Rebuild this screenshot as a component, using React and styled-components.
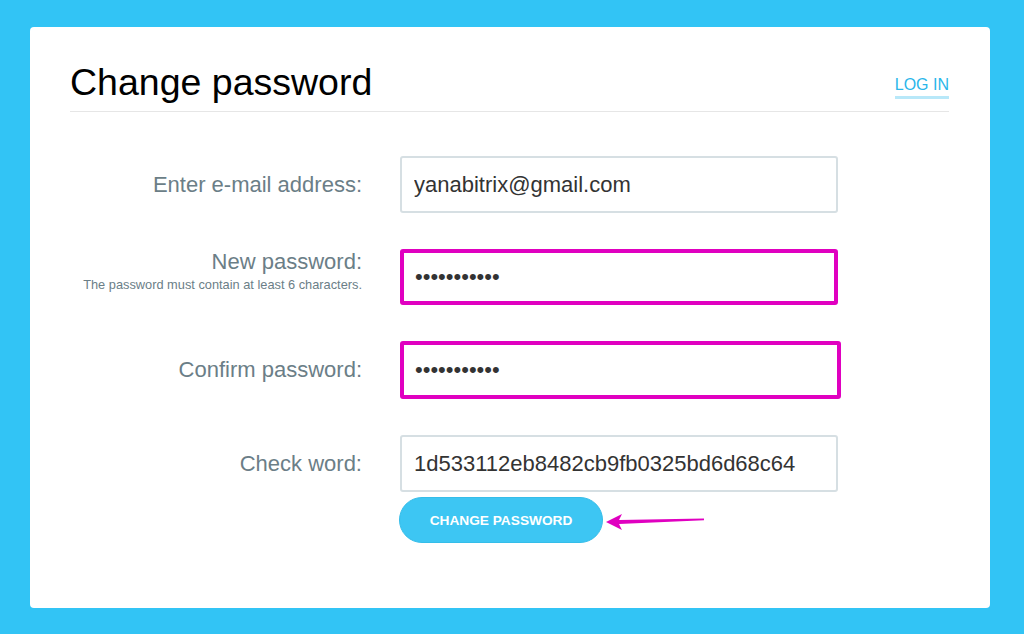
import styled, { createGlobalStyle } from "styled-components";

const GlobalStyle = createGlobalStyle`
    html, body {
        margin: 0;
        padding: 0;
        background: #32c4f5;
        font-family: "Liberation Sans", Arial, sans-serif;
    }
    * { box-sizing: border-box; }
`

const fields = [
    { label: "Enter e-mail address:", type: "text", value: "yanabitrix@gmail.com", height: 57 },
    { label: "New password:", hint: "The password must contain at least 6 characters.", type: "password", value: "12345678901", highlight: true },
    { label: "Confirm password:", type: "password", value: "12345678901", highlight: true, width: 441, height: 58 },
    { label: "Check word:", type: "text", value: "1d533112eb8482cb9fb0325bd6d68c64", height: 57 },
]

const App = () => {
    return <Page>
        <GlobalStyle />
        <Card>
            <Header>
                <Title>Change password</Title>
                <LogIn href="#">LOG IN</LogIn>
            </Header>
            <Form>
                {
                    fields.map((f) => {
                        return <Row key={f.label}>
                            <Label $top={!!f.hint}>
                                <span>{f.label}</span>
                                {f.hint && <Hint>{f.hint}</Hint>}
                            </Label>
                            <Input
                                type={f.type}
                                defaultValue={f.value}
                                readOnly
                                $highlight={f.highlight}
                                $w={f.width}
                                $h={f.height}
                            />
                        </Row>
                    })
                }
                <ButtonRow>
                    <Submit>CHANGE PASSWORD</Submit>
                    <svg width="104" height="26" viewBox="0 0 104 26">
                        <polygon points="3,15 19,7 16,13 101,11.6 101,13.2 16,17 19,23" fill="#e000c0" />
                    </svg>
                </ButtonRow>
            </Form>
        </Card>
    </Page>
}

const Page = styled.div`
    padding: 27px 34px 27px 30px;
`
const Card = styled.div`
    width: 960px;
    background: #fff;
    border-radius: 4px;
    padding: 33px 41px 65px 40px;
`
const Header = styled.div`
    display: flex;
    justify-content: space-between;
    align-items: flex-start;
    padding-bottom: 7px;
    border-bottom: 1px solid #e6e6e6;
`
const Title = styled.h1`
    margin: 0;
    font-size: 37.5px;
    line-height: 44px;
    font-weight: 400;
    color: #000;
`
const LogIn = styled.a`
    margin-top: 16px;
    font-size: 16px;
    line-height: 18px;
    padding-bottom: 2px;
    color: #2ab6ea;
    text-decoration: none;
    border-bottom: 3px solid #b8e8f9;
`
const Form = styled.div`
    display: flex;
    flex-direction: column;
    gap: 36px;
    margin-top: 44px;
`
const Row = styled.div`
    display: grid;
    grid-template-columns: 292px auto;
    column-gap: 38px;
    align-items: center;
`
const Label = styled.div`
    display: flex;
    flex-direction: column;
    align-items: flex-end;
    align-self: ${p => p.$top ? "start" : "center"};
    font-size: 22px;
    line-height: 26px;
    color: #6b7e87;
`
const Hint = styled.span`
    margin-top: 3px;
    font-size: 12.8px;
    line-height: 14px;
`
const Input = styled.input`
    width: ${p => p.$w || 438}px;
    height: ${p => p.$h || 56}px;
    padding: 0 12px 0 ${p => p.$highlight ? 11 : 12}px;
    border: ${p => p.$highlight ? "4px solid #e000c0" : "2px solid #d6dfe3"};
    border-radius: 3px;
    background: #fff;
    font-family: "Liberation Sans", Arial, sans-serif;
    font-size: 22px;
    color: #333;
    outline: none;
`
const ButtonRow = styled.div`
    display: flex;
    align-items: center;
    margin-top: -31px;
    padding-left: 329px;
`
const Submit = styled.button`
    width: 204px;
    height: 46px;
    border: 1px solid #35bde9;
    border-radius: 23px;
    background: #3dc6f3;
    color: #fff;
    font-family: "Liberation Sans", Arial, sans-serif;
    font-weight: 700;
    font-size: 13.7px;
    cursor: pointer;
`

export default App;
